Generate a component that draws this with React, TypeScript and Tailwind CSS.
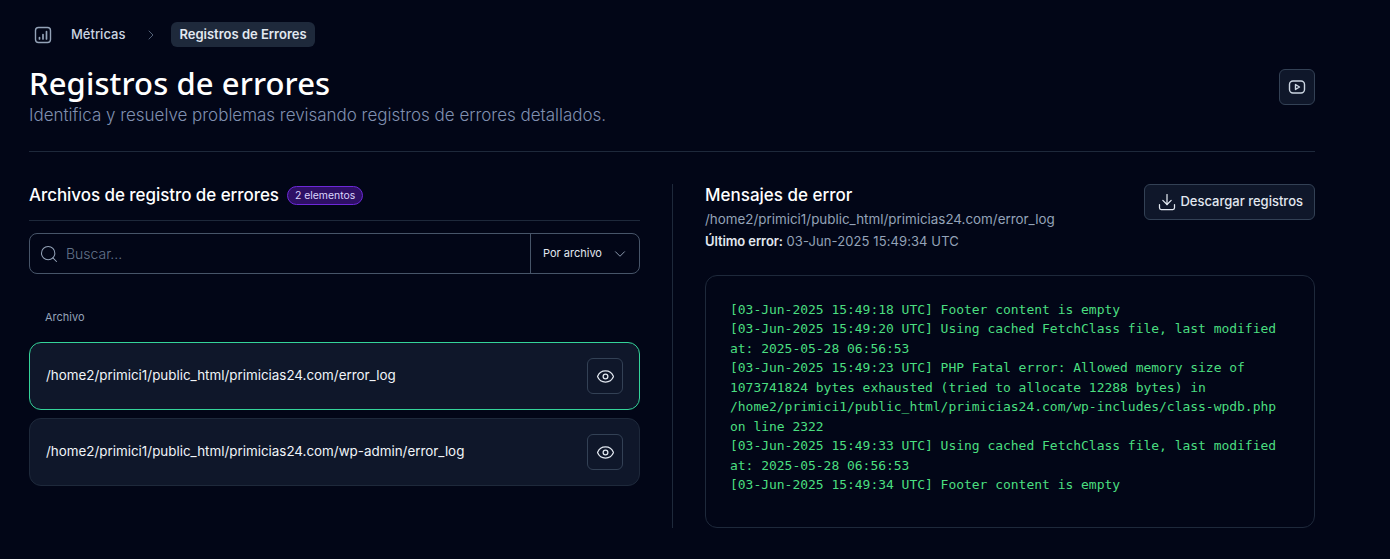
import React from "react";
import { ChevronDown, ChevronRight, Download, Eye, Search } from "lucide-react";

const files = [
  { path: "/home2/primici1/public_html/primicias24.com/error_log", active: true },
  { path: "/home2/primici1/public_html/primicias24.com/wp-admin/error_log", active: false },
];

const logLines = [
  "[03-Jun-2025 15:49:18 UTC] Footer content is empty",
  "[03-Jun-2025 15:49:20 UTC] Using cached FetchClass file, last modified at: 2025-05-28 06:56:53",
  "[03-Jun-2025 15:49:23 UTC] PHP Fatal error: Allowed memory size of 1073741824 bytes exhausted (tried to allocate 12288 bytes) in /home2/primici1/public_html/primicias24.com/wp-includes/class-wpdb.php on line 2322",
  "[03-Jun-2025 15:49:33 UTC] Using cached FetchClass file, last modified at: 2025-05-28 06:56:53",
  "[03-Jun-2025 15:49:34 UTC] Footer content is empty",
];

const App: React.FC = () => {
  return (
    <div className="h-[559px] overflow-hidden bg-[#020617] pl-[29px] pr-[75px] pt-[22px] font-['Inter',sans-serif] text-white">
      {/* BREADCRUMB */}
      <div className="flex h-[25px] items-center text-[13px]">
        <svg width="18" height="18" viewBox="0 0 18 18" fill="none" stroke="#94a3b8" strokeWidth="1.4" className="ml-[5px]">
          <rect x="1.5" y="1.5" width="15" height="15" rx="3" />
          <path d="M5.5 13v-1.5M9 13V8.5M12.5 13V5.5" strokeLinecap="round" strokeWidth="1.7" />
        </svg>
        <span className="ml-[19px] font-medium text-[#cbd5e1]">Métricas</span>
        <ChevronRight size={16} strokeWidth={1.25} className="ml-[18px] text-[#64748b]" />
        <span className="ml-[12px] rounded-md bg-[#1e293b] px-2 py-[4px] font-semibold leading-[17px] text-[#e2e8f0]">
          Registros de Errores
        </span>
      </div>

      {/* HEADER */}
      <div className="mt-[18px] flex items-start justify-between border-b border-[#1e293b] pb-[24px]">
        <div>
          <h1 className="font-['Noto_Sans',sans-serif] text-[31px] font-medium leading-[36px] tracking-[0.1px]">Registros de errores</h1>
          <p className="mt-[2px] text-[17px] font-light leading-[24px] tracking-[-0.02px] text-[#8090b0]">
            Identifica y resuelve problemas revisando registros de errores detallados.
          </p>
        </div>
        <button className="mt-[4px] flex h-9 w-9 items-center justify-center rounded-md border border-[#334155] bg-[#0f172a]">
          <svg width="18" height="18" viewBox="0 0 18 18" fill="none" stroke="#cbd5e1" strokeWidth="1.4">
            <rect x="1.5" y="3" width="15" height="12" rx="3.5" />
            <path d="M7.5 6.5v5L11.5 9z" strokeLinejoin="round" />
          </svg>
        </button>
      </div>

      <div className="mt-8 flex">
        {/* LEFT: FILES */}
        <div className="w-[611px]">
          <div className="flex items-center gap-2 border-b border-[#1e293b] pb-[14px]">
            <h2 className="text-[17px] font-medium leading-[22px] tracking-[-0.06px]">Archivos de registro de errores</h2>
            <span className="rounded-full border border-[#6d28d9] bg-[#2e1065] px-[7px] text-[10.4px] leading-[17px] text-[#ddd6fe]">
              2 elementos
            </span>
          </div>

          <div className="mt-3 flex h-[41px] items-center rounded-lg border border-[#475569]">
            <Search size={20} strokeWidth={1.25} className="ml-[9px] text-[#94a3b8]" />
            <span className="ml-[7px] flex-1 text-[14px] font-light text-[#64748b]">Buscar...</span>
            <div className="flex h-full w-[109px] items-center border-l border-[#475569] pl-3 text-[11px]">
              <span className="flex-1 text-[#e2e8f0]">Por archivo</span>
              <ChevronDown size={18} strokeWidth={1.25} className="mr-[10px] text-[#94a3b8]" />
            </div>
          </div>

          <div className="mt-[35px] pl-4 text-[11px] leading-4 text-[#94a3b8]">Archivo</div>

          <div className="mt-[17px] flex flex-col gap-2">
            {files.map((f) => (
              <div
                key={f.path}
                className={`flex h-[68px] items-center justify-between rounded-xl border bg-[#0f172a] pl-4 pr-4 ${
                  f.active ? "border-[#34d399]" : "border-[#1e293b]"
                }`}
              >
                <span className="-mt-px text-[13.4px] leading-[19px] text-[#f1f5f9]">{f.path}</span>
                <button className="flex h-9 w-9 items-center justify-center rounded-md border border-[#334155] bg-[#0f172a]">
                  <Eye size={19} strokeWidth={1.6} className="text-[#e2e8f0]" />
                </button>
              </div>
            ))}
          </div>
        </div>

        <div className="mx-[32px] w-px self-stretch bg-[#1e293b]" />

        {/* RIGHT: MESSAGES */}
        <div className="flex-1">
          <div className="flex items-start justify-between">
            <div>
              <h2 className="text-[17px] font-medium leading-[22px]">Mensajes de error</h2>
              <p className="mt-[2px] text-[13.4px] leading-[22px] text-[#94a3b8]">
                /home2/primici1/public_html/primicias24.com/error_log
              </p>
              <p className="text-[13px] leading-[22px] text-[#94a3b8]">
                <span className="font-semibold tracking-[-0.1px] text-[#e2e8f0]">Último error:</span>{" "}
                <span className="tracking-[0.1px]">03-Jun-2025 15:49:34 UTC</span>
              </p>
            </div>
            <button className="flex h-9 items-center gap-[3px] rounded-md border border-[#334155] bg-[#0f172a] pl-3 pr-[11px] text-[13px] font-medium text-[#e2e8f0]">
              <Download size={20} strokeWidth={1.5} />
              Descargar registros
            </button>
          </div>

          <div className="mt-[23px] h-[253px] rounded-xl border border-[#1e293b] bg-[#020617] pl-6 pr-6 pt-[23.5px]">
            {logLines.map((line) => (
              <p key={line} className="font-['DejaVu_Sans_Mono',monospace] text-[13px] leading-[19.5px] tracking-[-0.026px] text-[#4ade80]">
                {line}
              </p>
            ))}
          </div>
        </div>
      </div>
    </div>
  );
};

export default App;
